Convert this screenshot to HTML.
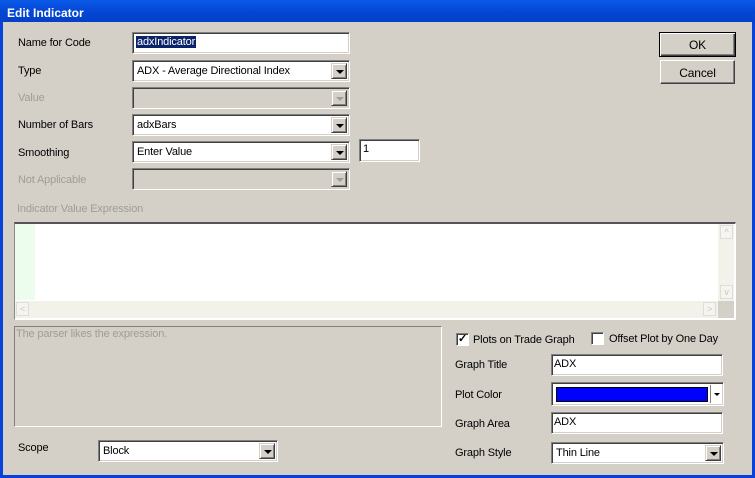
<!DOCTYPE html>
<html><head><meta charset="utf-8"><style>
*{box-sizing:border-box;margin:0;padding:0}
body{width:755px;height:478px;overflow:hidden;font-family:"Liberation Sans",Arial,sans-serif;font-size:11px;color:#000;background:#0842d8;position:relative;letter-spacing:-0.15px}
.win{position:absolute;left:3px;top:22px;width:749px;height:453px;background:#d4d0c8}
.title{position:absolute;left:0;top:0;width:755px;height:22px;background:linear-gradient(#0a5ae8,#0547d6 50%,#0440c8);color:#fff;font-weight:bold;font-size:12px;padding:6px 0 0 7px;letter-spacing:0}
.a{position:absolute}
.lbl{position:absolute;white-space:nowrap}
.dis{color:#a09d96}
.sunk{position:absolute;background:#fff;border-top:1px solid #808080;border-left:1px solid #808080;border-right:1px solid #fff;border-bottom:1px solid #fff;box-shadow:inset 1px 1px 0 #404040,inset -1px -1px 0 #d4d0c8}
.sunk.g{background:#d4d0c8}
.txt{position:absolute;left:4px;top:4px;white-space:nowrap}
.arr{position:absolute;right:2px;top:2px;width:16px;height:16px;background:#d4d0c8;border-top:1px solid #d4d0c8;border-left:1px solid #d4d0c8;border-right:1px solid #404040;border-bottom:1px solid #404040;box-shadow:inset 1px 1px 0 #fff,inset -1px -1px 0 #808080}
.arr:after{content:"";position:absolute;left:4px;top:6px;border-left:4px solid transparent;border-right:4px solid transparent;border-top:4px solid #000}
.arr.d:after{border-top-color:#a09d96}
.btn{position:absolute;background:#d4d0c8;border-top:1px solid #fff;border-left:1px solid #fff;border-right:1px solid #404040;border-bottom:1px solid #404040;box-shadow:inset -1px -1px 0 #808080;text-align:center;padding-top:5px;font-size:12px}
.cb{position:absolute;width:13px;height:13px;background:#fff;border-top:1px solid #808080;border-left:1px solid #808080;border-right:1px solid #fff;border-bottom:1px solid #fff;box-shadow:inset 1px 1px 0 #404040}
</style></head><body>
<div class="title">Edit Indicator</div>
<div class="win"></div>
<div class="a" style="left:0;top:475px;width:755px;height:3px;background:#0842d8"></div>

<div class="lbl" style="left:18px;top:37px">Name for Code</div>
<div class="sunk" style="left:132px;top:32px;width:218px;height:22px"><span class="txt" style="top:3px;left:3px;background:#0a246a;color:#fff;padding:0 1px">adxIndicator</span></div>

<div class="lbl" style="left:18px;top:65px">Type</div>
<div class="sunk" style="left:132px;top:60px;width:218px;height:22px"><span class="txt">ADX - Average Directional Index</span><div class="arr"></div></div>

<div class="lbl dis" style="left:18px;top:92px">Value</div>
<div class="sunk g" style="left:132px;top:87px;width:218px;height:22px"><div class="arr d"></div></div>

<div class="lbl" style="left:18px;top:119px">Number of Bars</div>
<div class="sunk" style="left:132px;top:114px;width:218px;height:22px"><span class="txt">adxBars</span><div class="arr"></div></div>

<div class="lbl" style="left:18px;top:147px">Smoothing</div>
<div class="sunk" style="left:132px;top:141px;width:218px;height:22px"><span class="txt">Enter Value</span><div class="arr"></div></div>
<div class="sunk" style="left:359px;top:139px;width:61px;height:23px"><span class="txt" style="left:3px;top:3px">1</span></div>

<div class="lbl dis" style="left:18px;top:174px">Not Applicable</div>
<div class="sunk g" style="left:132px;top:168px;width:218px;height:22px"><div class="arr d"></div></div>

<div class="btn" style="left:659px;top:32px;width:77px;height:25px;border:1px solid #000;box-shadow:inset 1px 1px 0 #fff,inset -1px -1px 0 #404040,inset -2px -2px 0 #808080">OK</div>
<div class="btn" style="left:660px;top:60px;width:75px;height:24px">Cancel</div>

<div class="lbl dis" style="left:17px;top:203px">Indicator Value Expression</div>
<div class="a" style="left:14px;top:222px;width:722px;height:98px;background:#fff;border-top:2px solid #555;border-left:1px solid #888;border-right:1px solid #fff;border-bottom:1px solid #fff"></div>
<div class="a" style="left:15px;top:224px;width:20px;height:76px;background:#ecfded"></div>
<div class="a" style="left:718px;top:224px;width:16px;height:77px;background:#f2f1ea"></div>
<div class="a" style="left:720px;top:225px;width:13px;height:14px;border:1px solid #ddd;background:#f5f4ee;color:#c8c5bb;font-size:9px;text-align:center;line-height:12px">&#94;</div>
<div class="a" style="left:720px;top:285px;width:13px;height:14px;border:1px solid #ddd;background:#f5f4ee;color:#c8c5bb;font-size:9px;text-align:center;line-height:12px">v</div>
<div class="a" style="left:15px;top:301px;width:703px;height:17px;background:#f2f1ea"></div>
<div class="a" style="left:16px;top:302px;width:13px;height:14px;border:1px solid #ddd;background:#f5f4ee;color:#c8c5bb;font-size:9px;text-align:center;line-height:12px">&lt;</div>
<div class="a" style="left:703px;top:302px;width:13px;height:14px;border:1px solid #ddd;background:#f5f4ee;color:#c8c5bb;font-size:9px;text-align:center;line-height:12px">&gt;</div>
<div class="a" style="left:718px;top:301px;width:16px;height:17px;background:#d4d0c8"></div>

<div class="a" style="left:14px;top:326px;width:428px;height:101px;border-top:1px solid #808080;border-left:1px solid #808080;border-right:1px solid #fff;border-bottom:1px solid #fff"></div>
<div class="lbl dis" style="left:16px;top:328px">The parser likes the expression.</div>

<div class="lbl" style="left:18px;top:442px">Scope</div>
<div class="sunk" style="left:98px;top:440px;width:180px;height:22px"><span class="txt">Block</span><div class="arr"></div></div>

<div class="cb" style="left:456px;top:333px"></div>
<div class="a" style="left:458px;top:333px;font-size:11px;font-weight:bold;line-height:13px">&#10003;</div>
<div class="lbl" style="left:473px;top:334px">Plots on Trade Graph</div>
<div class="cb" style="left:591px;top:332px"></div>
<div class="lbl" style="left:609px;top:333px">Offset Plot by One Day</div>

<div class="lbl" style="left:455px;top:359px">Graph Title</div>
<div class="sunk" style="left:551px;top:354px;width:172px;height:22px"><span class="txt" style="left:2px;top:3px">ADX</span></div>

<div class="lbl" style="left:455px;top:389px">Plot Color</div>
<div class="sunk" style="left:551px;top:382px;width:173px;height:24px;background:#fff"></div>
<div class="a" style="left:556px;top:387px;width:152px;height:15px;background:#0000ff;border:1px solid #000"></div>
<div class="a" style="left:710px;top:385px;width:1px;height:18px;background:#808080"></div>
<div class="a" style="left:714px;top:393px;border-left:3px solid transparent;border-right:3px solid transparent;border-top:3px solid #000"></div>

<div class="lbl" style="left:455px;top:418px">Graph Area</div>
<div class="sunk" style="left:551px;top:412px;width:172px;height:22px"><span class="txt" style="left:2px;top:3px">ADX</span></div>

<div class="lbl" style="left:455px;top:447px">Graph Style</div>
<div class="sunk" style="left:551px;top:442px;width:173px;height:22px"><span class="txt">Thin Line</span><div class="arr"></div></div>
</body></html>
